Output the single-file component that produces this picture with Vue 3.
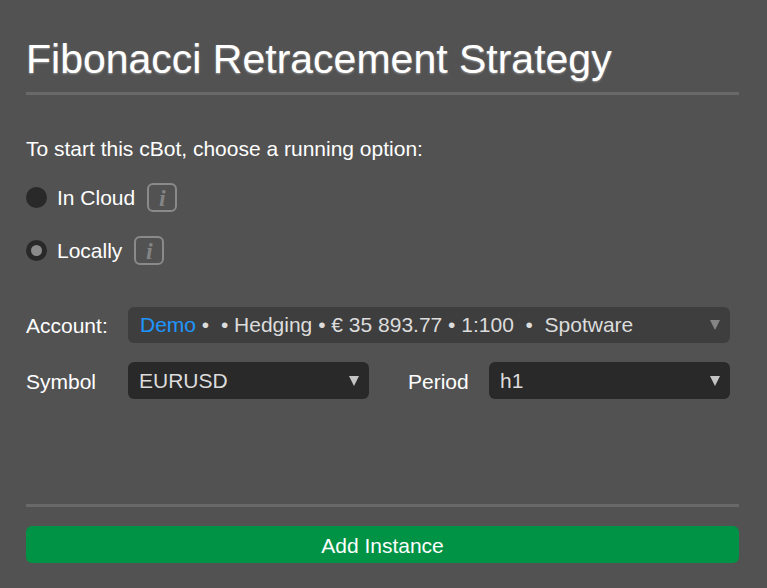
<script setup>
import { ref } from 'vue'

const mode = ref('local')
const symbol = ref('EURUSD')
const period = ref('h1')

const modes = [
  { value: 'cloud', label: 'In Cloud' },
  { value: 'local', label: 'Locally' },
]
</script>

<template>
  <main class="dialog">
    <h1 class="title">Fibonacci Retracement Strategy</h1>

    <p class="intro">To start this cBot, choose a running option:</p>

    <div class="modes">
      <div v-for="item in modes" :key="item.value" class="mode">
        <label class="choice">
          <input v-model="mode" class="radio" type="radio" name="mode" :value="item.value" />
          <span>{{ item.label }}</span>
        </label>
        <button class="info" type="button">i</button>
      </div>
    </div>

    <div class="form">
      <label class="caption" for="account">Account:</label>
      <div class="picker wide muted">
        <select id="account" class="select ghost" disabled>
          <option>Demo</option>
        </select>
        <span class="summary"><span class="demo">Demo</span> •&nbsp; • Hedging • € 35 893.77 • 1:100&nbsp; •&nbsp; Spotware</span>
        <svg class="arrow" viewBox="0 0 10 10"><path d="M0 0H10L5 10Z" /></svg>
      </div>

      <label class="caption" for="symbol">Symbol</label>
      <div class="picker">
        <select id="symbol" v-model="symbol" class="select">
          <option>EURUSD</option>
          <option>GBPUSD</option>
        </select>
        <svg class="arrow" viewBox="0 0 10 10"><path d="M0 0H10L5 10Z" /></svg>
      </div>

      <label class="caption second" for="period">Period</label>
      <div class="picker">
        <select id="period" v-model="period" class="select">
          <option>h1</option>
          <option>h4</option>
        </select>
        <svg class="arrow" viewBox="0 0 10 10"><path d="M0 0H10L5 10Z" /></svg>
      </div>
    </div>

    <footer class="footer">
      <button class="add" type="button">Add Instance</button>
    </footer>
  </main>
</template>

<style>
body {
  background: #525252;
}
</style>

<style scoped>
.dialog {
  box-sizing: border-box;
  display: flex;
  flex-direction: column;
  min-height: 100vh;
  padding: 35px 28px 25px 26px;
  color: #fff;
  font: 21px/24px "Liberation Sans", Arial, sans-serif;
}

.title {
  margin: 0;
  padding-bottom: 9px;
  border-bottom: 3px solid #696969;
  font-size: 41px;
  line-height: 48px;
  font-weight: 400;
  text-shadow: 0 1px 2px rgba(255, 255, 255, 0.4);
}

.intro {
  margin: 42px 0 22px;
}

.modes {
  display: grid;
  gap: 24px;
}

.mode {
  display: flex;
  align-items: center;
  gap: 12px;
}

.choice {
  display: flex;
  align-items: center;
  gap: 10px;
}

.radio {
  appearance: none;
  width: 21px;
  height: 21px;
  margin: 0;
  border-radius: 50%;
  background: #292929;
}

.radio:checked {
  border: 5px solid #292929;
  background: #8a8a8a;
}

.info {
  box-sizing: border-box;
  width: 30px;
  height: 29px;
  padding: 0;
  border: 2px solid #8a8a8a;
  border-radius: 6px;
  background: none;
  color: #848484;
  font: italic bold 24px/24px "Liberation Serif", "Times New Roman", serif;
}

.form {
  display: grid;
  grid-template-columns: 102px 1fr 120px 1fr;
  row-gap: 19px;
  align-items: center;
  margin: 42px 9px 0 0;
}

.caption {
  padding-top: 2px;
}

.second {
  padding-left: 39px;
}

.picker {
  display: grid;
  align-items: center;
  border-radius: 6px;
  background: #292929;
  color: #dcdcdc;
}

.picker > * {
  grid-area: 1 / 1;
}

.wide {
  grid-column: 2 / -1;
}

.muted {
  background: #3e3e3e;
}

.select {
  appearance: none;
  width: 100%;
  height: 37px;
  padding: 0 30px 0 11px;
  border: 0;
  border-radius: 6px;
  background: none;
  color: inherit;
  font: inherit;
}

.ghost {
  height: 36px;
  color: transparent;
  opacity: 1;
}

.summary {
  padding-left: 12px;
  white-space: nowrap;
  pointer-events: none;
}

.demo {
  color: #1e96ff;
}

.arrow {
  justify-self: end;
  width: 10px;
  height: 10px;
  margin-right: 10px;
  fill: #c4c4c4;
  pointer-events: none;
}

.muted .arrow {
  fill: #858585;
}

.footer {
  margin-top: auto;
  padding-top: 19px;
  border-top: 3px solid #696969;
}

.add {
  display: block;
  width: 100%;
  height: 37px;
  padding: 2px 0 0;
  border: 0;
  border-radius: 6px;
  background: #009345;
  color: #fff;
  font: inherit;
}
</style>
